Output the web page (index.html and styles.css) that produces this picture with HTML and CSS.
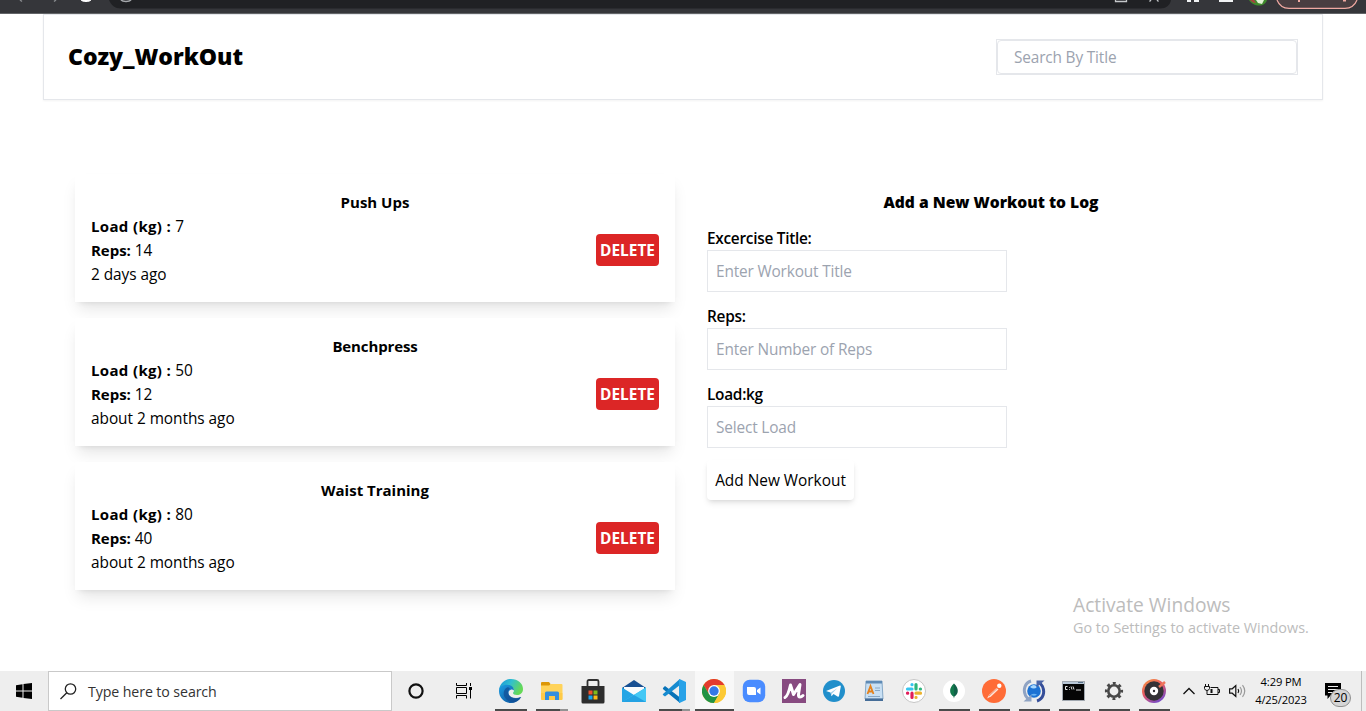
FILE: index.html
```html
<!DOCTYPE html>
<html lang="en">
<head>
<meta charset="utf-8">
<title>Cozy_WorkOut</title>
<link rel="stylesheet" href="styles.css">
</head>
<body>
<div class="screen">
  <div class="browser">
    <svg width="1366" height="14" viewBox="0 0 1366 14">
      <path d="M109 0H1171C1170 5.500 1166 8.500 1160 8.500H121C115 8.500 111 5 109 0Z" fill="#202124"/>
      <path d="M20 0l2 1.500M56 0l-2 1.500" stroke="#85888b" stroke-width="1.500"/>
      <path d="M81 0c2 2 8 2 10 0" fill="#fff" stroke="#fff" stroke-width="1"/>
      <path d="M121 0c2 2 8 2 10 0" fill="none" stroke="#a5a8ac" stroke-width="1.600"/>
      <path d="M1115.500 0v1.500h11V0M1149.500 1.500l1.500-1.500M1158.500 1.500l-1.500-1.500" fill="none" stroke="#c4c7c9" stroke-width="1.300"/>
      <path d="M1187 0h4v2h-4zM1194 0h5v2h-5zM1219 0h14v2h-14z" fill="#f1f3f4"/>
      <path d="M1249 0h18c-1 3.500-4 5.500-8 5.500s-8-2-10-5.500z" fill="#3f8a2c"/>
      <path d="M1256 0h8l-2 4-4-1z" fill="#e4f3d8"/><path d="M1250 0h4l2 3-3-.500z" fill="#a8433d"/>
      <path d="M1277 0c2 5 6 8.300 12 8.300h56c6 0 10-3.300 12-8.300" fill="#493e41" stroke="#f0a9a2" stroke-width="1.200"/>
      <path d="M1298 0h2v2h-2zM1343 0h3v1.500h-3z" fill="#f0a9a2"/>
    </svg>
  </div>

  <div class="page">
    <header class="navbar">
      <h1 class="brand">Cozy_WorkOut</h1>
      <div class="search-frame"><input class="search" type="text" placeholder="Search By Title"></div>
    </header>

    <main class="content">
      <section class="workouts">
        <article class="card">
          <h2 class="card-title">Push Ups</h2>
          <div class="card-body">
            <div class="facts">
              <p><b class="load">Load (kg) :</b> 7</p>
              <p><b>Reps:</b> 14</p>
              <p>2 days ago</p>
            </div>
            <button class="delete">DELETE</button>
          </div>
        </article>
        <article class="card">
          <h2 class="card-title tight">Benchpress</h2>
          <div class="card-body">
            <div class="facts">
              <p><b class="load">Load (kg) :</b> 50</p>
              <p><b>Reps:</b> 12</p>
              <p>about 2 months ago</p>
            </div>
            <button class="delete">DELETE</button>
          </div>
        </article>
        <article class="card">
          <h2 class="card-title">Waist Training</h2>
          <div class="card-body">
            <div class="facts">
              <p><b class="load">Load (kg) :</b> 80</p>
              <p><b>Reps:</b> 40</p>
              <p>about 2 months ago</p>
            </div>
            <button class="delete">DELETE</button>
          </div>
        </article>
      </section>

      <form class="new-workout">
        <h2 class="form-title">Add a New Workout to Log</h2>
        <label class="field"><span>Excercise Title:</span><input type="text" placeholder="Enter Workout Title"></label>
        <label class="field"><span>Reps:</span><input type="text" placeholder="Enter Number of Reps"></label>
        <label class="field"><span>Load:kg</span><input type="text" placeholder="Select Load"></label>
        <button class="submit" type="button">Add New Workout</button>
      </form>
    </main>
  </div>

  <div class="watermark">
    <p class="watermark-title">Activate Windows</p>
    <p class="watermark-text">Go to Settings to activate Windows.</p>
  </div>

  <footer class="taskbar">
    <div class="start">
      <svg width="16" height="16" viewBox="0 0 16 16"><path d="M0 2.200L6.500 1.300V7.500H0ZM7.500 1.100L16 0V7.500H7.500ZM0 8.500H6.500V14.700L0 13.800ZM7.500 8.500H16V16L7.500 14.900Z"/></svg>
    </div>
    <div class="task-search">
      <svg width="17" height="17" viewBox="0 0 17 17" fill="none" stroke="#222" stroke-width="1.300"><circle cx="10.500" cy="6" r="5.200"/><path d="M6.800 9.700L.5 16"/></svg>
      <span>Type here to search</span>
    </div>
    <div class="system">
      <svg width="16" height="16" viewBox="0 0 16 16"><circle cx="8" cy="8" r="6.600" fill="none" stroke="#111" stroke-width="2.200"/></svg>
    </div>
    <div class="system">
      <svg width="18" height="16" viewBox="0 0 18 16" fill="none" stroke="#000"><path d="M1.500 0v2.500h10V0M1.500 15.500v-3h10v3M1.500 4.500h10v6h-10zM15.500 0v3M15.500 7v8.500"/><path d="M14 4h3v3h-3z" fill="#000" stroke="none"/></svg>
    </div>

    <div class="apps">
      <div class="app first running">
        <svg width="24" height="24" viewBox="0 0 24 24">
          <defs>
            <linearGradient id="edgeTop" x1="0" y1="0" x2="1" y2=".4"><stop offset="0" stop-color="#1593d8"/><stop offset=".5" stop-color="#31bfd0"/><stop offset="1" stop-color="#65d957"/></linearGradient>
            <linearGradient id="edgeLow" x1="0" y1="0" x2="1" y2="1"><stop offset="0" stop-color="#1b9de2"/><stop offset="1" stop-color="#0c4a94"/></linearGradient>
          </defs>
          <path d="M0 11C1 4 6 0 12 0c7 0 12 4.500 12 10 0 4-3 6-6 6-2.500 0-4-1-4-2 0-.7 1-1 1-2.500C15 9 12 7 8.500 7 4.500 7 1.500 8.500 0 11Z" fill="url(#edgeTop)"/>
          <path d="M0 12C0 8 3.500 5.800 8 5.800c4.500 0 7 2.800 7 5.700-1-1-2.300-1.200-3.200-.8C9.500 11.500 9 14 10 16c1.500 3 6 4.500 12.300 2C20 22 16 24 12 24 5 24 0 18.500 0 12Z" fill="url(#edgeLow)"/>
          <path d="M8 8.500c-3.500 2-4.500 7-1.800 10.500C8 21.500 11 23 14 23.500c3-.5 6-2.500 8-5.500-5 2-10 .8-12-2-1.500-2.500-1-5 1-6.300C10 8.500 9 8 8 8.500Z" fill="#114f96" opacity=".75"/>
        </svg>
      </div>
      <div class="app first running grouped">
        <svg width="22" height="20" viewBox="0 0 22 20">
          <path d="M0 2q0-1 1-1h7l1.500 2V6H0z" fill="#dc9708"/><path d="M0 4.500h8L10 3h10.500q1 0 1 1v14q0 1-1 1H1q-1 0-1-1z" fill="#ffd35a"/><path d="M0 12h21.500v6q0 1-1 1H1q-1 0-1-1z" fill="#ffc53b" opacity=".6"/><path d="M4 19v-7q0-1.500 1.500-1.500h11Q18 10.500 18 12v7h-4v-4H8v4z" fill="#348fdd"/>
        </svg>
      </div>
      <div class="app first">
        <svg width="24" height="25" viewBox="0 0 24 25">
          <path d="M6.500 8V2.500Q6.500 1 8 1h8q1.500 0 1.500 1.500V8" fill="none" stroke="#303030" stroke-width="1.800"/><path d="M.5 7h23v16q0 1.500-1.500 1.500H2Q.5 24.500.5 23z" fill="#2d2d2d"/><path d="M7.500 11.500h4v4h-4z" fill="#f0522c"/><path d="M12.500 11.500h4v4h-4z" fill="#80ba1c"/><path d="M7.500 16.500h4v4h-4z" fill="#19a5ef"/><path d="M12.500 16.500h4v4h-4z" fill="#fdba17"/>
        </svg>
      </div>
      <div class="app">
        <svg width="24" height="24" viewBox="0 0 24 24">
          <path d="M0 9L12 1l12 8v5H0z" fill="#164f93"/><path d="M2 8h20v7l-10 3-10-3z" fill="#f8fbfd"/><path d="M0 8.500L12 16 24 8.500V23H0z" fill="#24a5e5"/><path d="M24 8.500L0 23h24z" fill="#43c8f5"/><path d="M0 23l12-7 12 7z" fill="#1692dc" opacity=".7"/>
        </svg>
      </div>
      <div class="app running grouped">
        <svg width="24" height="24" viewBox="0 0 24 24">
          <path d="M1 9l2-2 15 11.500V24L1.500 10.500Q.5 9.800 1 9Z" fill="#0873b8"/><path d="M1 15L17.500.3 18 6 3 17.500 1 16Q.5 15.500 1 15Z" fill="#168bd0"/><path d="M17.500 0L24 3v18l-6.500 3q-.8 0-.5-1V1q-.3-1 .5-1Z" fill="#28a2e8"/>
        </svg>
      </div>
      <div class="app running active">
        <svg width="24" height="24" viewBox="0 0 24 24">
          <circle cx="12" cy="12" r="12" fill="#fcc934"/><path d="M1.600 6A12 12 0 0 1 22.400 6H12L7 15Z" fill="#e33b2e"/><path d="M1.600 6A12 12 0 0 0 12 24l5.200-9L7 15Z" fill="#229344"/><path d="M12 6h10.400A12 12 0 0 1 12 24l5.200-9z" fill="#fcc934"/><circle cx="12" cy="12" r="5.900" fill="#fff"/><circle cx="12" cy="12" r="4.700" fill="#3478e8"/>
        </svg>
      </div>
      <div class="app">
        <svg width="24" height="24" viewBox="0 0 24 24"><rect x=".8" y=".8" width="22.400" height="22.400" rx="7" fill="#4a8cff"/><path d="M5 8h7q2 0 2 2v6H7q-2 0-2-2zM15 11L18.500 8.500v7L15 13z" fill="#fff"/></svg>
      </div>
      <div class="app">
        <svg width="24" height="24" viewBox="0 0 24 24"><path d="M0 0h24v24H0z" fill="#874a80"/><path d="M3 18.500Q6 17 8.500 6L11.500 15.500 18 5.500 16.500 15.500q-.3 2.500 1.500 2.500 1.500 0 3-1.500" fill="none" stroke="#fff" stroke-width="3" stroke-linejoin="round" stroke-linecap="round"/></svg>
      </div>
      <div class="app">
        <svg width="24" height="24" viewBox="0 0 24 24"><circle cx="12" cy="12" r="11" fill="#218fcb"/><path d="M4 12L18 6.500q1 0 .8 1L17 17q-.3 1.200-1.500.5L11.500 15l-2 2.200L8.500 13.500z" fill="#fff"/><path d="M8.700 13.500L15.500 9l-5.500 5.500-.5 2.500z" fill="#a8d1e9"/></svg>
      </div>
      <div class="app">
        <svg width="20" height="22" viewBox="0 0 20 22"><path d="M2 1h16l1 18H1z" fill="#c9e0f4" stroke="#86a9c8"/><path d="M2 1h16v2.500H2z" fill="#5e8ab5"/><path d="M1 18.500h18V21H1z" fill="#456d98"/><path d="M3.500 14L6.500 6l3 8M4.500 11.500h4" fill="none" stroke="#e5821c" stroke-width="1.800"/><path d="M11 8h5M11 10.500h5M4 16.500h12" stroke="#88a8c6"/></svg>
      </div>
      <div class="app">
        <svg width="24" height="24" viewBox="0 0 24 24"><circle cx="12" cy="12" r="11.500" fill="#fff" stroke="#c5c5c5"/><g fill="none" stroke-width="3.200" stroke-linecap="round"><path d="M5.500 10h4.500M10 5.500v.200" stroke="#36c5f0"/><path d="M14 5.500v4.500M18.500 10h-.2" stroke="#2eb67d"/><path d="M14 14.200h4.500M14 18.500v-.200" stroke="#ecb22e"/><path d="M10 14.200v4.300M5.500 14.200h.2" stroke="#e01e5a"/></g></svg>
      </div>
      <div class="app running">
        <svg width="24" height="24" viewBox="0 0 24 24"><circle cx="12" cy="12" r="11" fill="#fff"/><path d="M12 4.500c3 3 3.800 5 3.800 7.500 0 3-2 4.500-3.400 5.500L12 19.500l-.4-2C10.200 16.500 8.200 15 8.200 12c0-2.500.8-4.500 3.800-7.500Z" fill="#116149"/><path d="M12 4.500c-3 3-3.800 5-3.800 7.500 0 3 2 4.500 3.400 5.500L12 19.500Z" fill="#13aa52" opacity=".35"/></svg>
      </div>
      <div class="app running">
        <svg width="24" height="24" viewBox="0 0 24 24"><circle cx="12" cy="12" r="12" fill="#ff6c37"/><path d="M5 19.500l2-3.500 7.500-7 2 1.500-7.500 7z" fill="#ffe4d9"/><circle cx="17.300" cy="6.700" r="2.200" fill="#fff"/><path d="M7 17l8-7.500" stroke="#e87850" stroke-width=".7"/></svg>
      </div>
      <div class="app running">
        <svg width="24" height="24" viewBox="0 0 24 24"><circle cx="12" cy="12" r="6.800" fill="#1c72d4"/><path d="M8 8q4-4 7 0-3 3-7 0z" fill="#a8d8ff"/><path d="M9 15.500q3-1.500 6 0-3 2.500-6 0z" fill="#69b2f2"/><path d="M9 2C2.500 4 1 11 3.500 16.500L6 20" fill="none" stroke="#8fa3c3" stroke-width="3"/><path d="M15 22C21.500 20 23 13 20.500 7.500L18 4" fill="none" stroke="#354e99" stroke-width="3"/><path d="M1.500 22.500h8v-7z" fill="#8fa3c3"/><path d="M22.500 1.500h-8v7z" fill="#4a64a6"/></svg>
      </div>
      <div class="app running">
        <svg width="24" height="20" viewBox="0 0 24 20"><path d="M.5.5h22v19H.5z" fill="#050505" stroke="#a1a8b0"/><path d="M1 1h21v2H1z" fill="#b9c8d7"/><path d="M16 1.500h5" stroke="#58728b"/><path d="M5.500 5.500h-2v3h2M7.500 6v.7M7.500 8v.7M9 5.500l1 3M11 5.500l1 3M14 9h5" stroke="#fff" fill="none" stroke-width=".9"/></svg>
      </div>
      <div class="app running">
        <svg width="24" height="24" viewBox="0 0 24 24"><circle cx="12" cy="12" r="5.700" fill="none" stroke="#484848" stroke-width="2.600"/><circle cx="12" cy="12" r="7.800" fill="none" stroke="#484848" stroke-width="2.600" stroke-dasharray="2.900 3.226" stroke-dashoffset="1.450"/></svg>
      </div>
      <div class="app running">
        <svg width="24" height="24" viewBox="0 0 24 24"><defs><linearGradient id="groove" x1="0" y1="0" x2=".6" y2="1"><stop offset="0" stop-color="#f79a3e"/><stop offset=".5" stop-color="#e85a62"/><stop offset="1" stop-color="#7a4bc4"/></linearGradient></defs><circle cx="12" cy="12" r="12" fill="url(#groove)"/><circle cx="12" cy="12" r="9.700" fill="#343236"/><circle cx="12" cy="12" r="4.200" fill="#fff"/><circle cx="12" cy="12" r="1.200" fill="#343236"/><path d="M17 8l6-5" stroke="#ef755a" stroke-width="2.500"/></svg>
      </div>
    </div>

    <div class="tray">
      <svg width="12" height="8" viewBox="0 0 12 8"><path d="M.5 7L6 1.500 11.500 7" fill="none" stroke="#111" stroke-width="1.300"/></svg>
      <svg width="16" height="14" viewBox="0 0 16 14" fill="none" stroke="#111"><path d="M6.500 3.500h7.500v7H5M14 5.500h1.500v3H14M1.500 0v2.500M4.500 0v2.500M.5 2.500h5v2q-.5 2-2.500 2t-2.500-2zM3 6.500v4h2.500"/><path d="M6.500 5h2v4h-2z" fill="#111" stroke="none"/></svg>
      <svg width="17" height="14" viewBox="0 0 17 14" fill="none" stroke="#111" stroke-width="1.200"><path d="M.6 4.800h2.600L6.800 1.500v11L3.200 9.200H.6z"/><path d="M9 5q1.500 2 0 4"/><path d="M11 3q3 4 0 8M13.500 1.200q4.500 5.800 0 11.600" stroke="#999"/></svg>
    </div>
    <div class="clock"><span>4:29 PM</span><span>4/25/2023</span></div>
    <div class="notices">
      <svg width="16" height="16" viewBox="0 0 16 16"><path d="M0 0h16v12.500H5.500L2.500 16v-3.500H0z"/><path d="M3 3.500h10M3 6.500h10M3 9.500h7" stroke="#eee" stroke-width="1.200"/></svg>
      <span class="badge">20</span>
    </div>
    <div class="peek"></div>
  </footer>
</div>
</body>
</html>
```
FILE: styles.css
```css
* { box-sizing: border-box; margin: 0; padding: 0; }

body {
  width: 1366px;
  height: 711px;
  overflow: hidden;
  background: #fff;
  color: #000;
  font: 400 15.4px/24px "Open Sans", "Noto Sans", sans-serif;
}

svg { display: block; flex: none; }
input, button { font: inherit; color: inherit; }
input { background: #fff; outline: none; }
input::placeholder { color: #9ca3af; opacity: 1; }

.screen { display: flex; flex-direction: column; width: 1366px; height: 711px; position: relative; }

.browser { height: 14px; background: #35363a; border-bottom: 1px solid #626467; overflow: hidden; }

.page { flex: 1; width: 1280px; margin: 0 auto; }

.navbar {
  display: flex;
  align-items: center;
  justify-content: space-between;
  height: 86px;
  padding: 0 24px;
  border: 1px solid #e5e7eb;
  box-shadow: 0 1px 2px rgba(0, 0, 0, .05);
}
.brand { padding-bottom: 2px; font-size: 23px; line-height: 32px; font-weight: 800; letter-spacing: -.05px; }
.search-frame { width: 302px; height: 36px; border: 1px solid #e5e7eb; }
.search {
  display: block;
  width: 300px;
  height: 34px;
  padding: 0 16px;
  border: 1px solid #e5e7eb;
  border-radius: 4px;
  letter-spacing: -.16px;
}

.content { display: grid; grid-template-columns: 600px 568px; gap: 32px; padding: 74px 32px 0; }

.workouts { display: flex; flex-direction: column; gap: 16px; }
.card {
  height: 128px;
  padding: 16px;
  background: #fff;
  box-shadow: 0 10px 15px -3px rgba(0, 0, 0, .1), 0 4px 6px -4px rgba(0, 0, 0, .1);
}
.card-title { font-size: 15px; line-height: 24px; font-weight: 700; text-align: center; }
.card-title.tight { letter-spacing: -.12px; }
.card-body { display: flex; align-items: center; justify-content: space-between; height: 72px; }
.facts p { height: 24px; line-height: 26px; letter-spacing: -.04px; }
.facts b { font-size: 15px; line-height: 20px; font-weight: 700; }
.facts .load { letter-spacing: .35px; }
.delete {
  width: 63px;
  height: 32px;
  padding-top: 1px;
  border: 0;
  border-radius: 4px;
  background: #dc2626;
  color: #fff;
  font-weight: 700;
}

.new-workout { display: flex; flex-direction: column; align-items: flex-start; gap: 12px; padding-top: 16px; }
.form-title { align-self: stretch; text-align: center; font-size: 15.6px; line-height: 24px; font-weight: 800; }
.field { display: flex; flex-direction: column; width: 300px; }
.field span { height: 24px; line-height: 26px; font-weight: 600; letter-spacing: -.28px; }
.field input {
  height: 42px;
  padding: 0 8px;
  border: 1px solid #e5e7eb;
  letter-spacing: -.16px;
}
.submit {
  width: 147px;
  height: 40px;
  padding-top: 2px;
  border: 0;
  border-radius: 4px;
  background: #fff;
  box-shadow: 0 4px 6px -1px rgba(0, 0, 0, .1), 0 2px 4px -2px rgba(0, 0, 0, .1);
}

/* Overlay drawn by the desktop above every window */
.watermark { position: absolute; left: 1073px; top: 592px; color: #bcbcbc; white-space: nowrap; }
.watermark-title { font-size: 19.2px; line-height: 26px; }
.watermark-text { font-size: 14.4px; line-height: 19px; }

.taskbar { display: flex; height: 40px; background: #eee; }
.start { display: flex; align-items: center; justify-content: center; width: 48px; }
.task-search {
  display: flex;
  align-items: center;
  gap: 11px;
  width: 344px;
  padding-left: 11px;
  border: 1px solid #c9c9c9;
  background: #fff;
  color: #333;
  font-size: 14.2px;
  letter-spacing: -.1px;
}
.task-search span { padding-top: 2px; }
.system { display: flex; align-items: center; justify-content: center; width: 48px; }

.apps { display: flex; margin-left: 2px; }
.app { display: flex; align-items: center; justify-content: center; width: 40px; position: relative; }
.app.first { width: 41px; }
.app.first + .app:not(.first) { width: 41px; }
.app.running::after {
  content: "";
  position: absolute;
  left: 5px;
  right: 4px;
  bottom: 0;
  height: 2px;
  background: #4b4b4b;
}
.app.grouped::after { background: linear-gradient(to right, #4b4b4b 75%, #939393 75%); }
.app.active { background: linear-gradient(to right, transparent 1px, #f8f8f8 1px); }
.app.active::after { left: 1px; right: 0; }

.tray { display: flex; align-items: center; gap: 9px; margin-left: 9px; }
.clock {
  display: flex;
  flex-direction: column;
  align-items: center;
  width: 54px;
  padding-top: 2px;
  margin-left: 8px;
  font-size: 11.2px;
  line-height: 18px;
  letter-spacing: -.15px;
}
.notices { display: flex; align-items: center; margin-left: 17px; position: relative; }
.badge {
  position: absolute;
  left: 5px;
  top: 18px;
  width: 21px;
  height: 18px;
  border: 1px solid #909090;
  border-radius: 9px;
  background: #d5d5d5;
  font-size: 12px;
  line-height: 16px;
  text-align: center;
}
.peek { width: 5px; margin-left: auto; border-left: 1px solid #bdbdbd; }
```
